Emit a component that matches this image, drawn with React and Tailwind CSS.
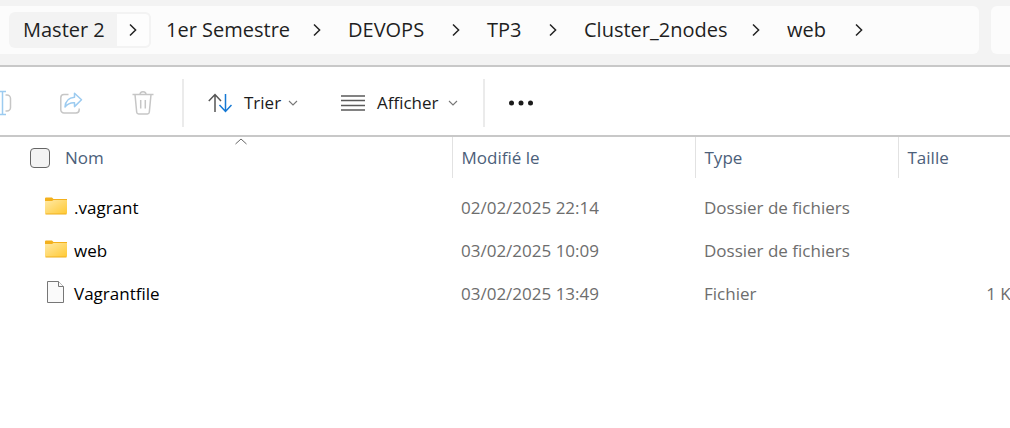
import React from "react";

const crumbs = [
  { label: "Master 2", width: "w-[108px]", active: true },
  { label: "1er Semestre", width: "w-[148px]" },
  { label: "DEVOPS", width: "w-[105px]" },
  { label: "TP3", width: "w-[63px]" },
  { label: "Cluster_2nodes", width: "w-[169px]" },
  { label: "web", width: "w-[69px]" },
];

const files = [
  { name: ".vagrant", date: "02/02/2025 22:14", type: "Dossier de fichiers", size: "", folder: true },
  { name: "web", date: "03/02/2025 10:09", type: "Dossier de fichiers", size: "", folder: true },
  { name: "Vagrantfile", date: "03/02/2025 13:49", type: "Fichier", size: "1 Ko", folder: false },
];

function ChevronRight() {
  return (
    <svg width="8" height="14" viewBox="0 0 8 14" fill="none" stroke="#222" strokeWidth="1.5" aria-hidden="true">
      <path d="M1 1.500 6.600 7 1 12.500" />
    </svg>
  );
}

function ChevronDown() {
  return (
    <svg width="10" height="6" viewBox="0 0 10 6" fill="none" stroke="#777" strokeWidth="1.1" aria-hidden="true">
      <path d="M1 1l4 4 4-4" />
    </svg>
  );
}

function RenameIcon() {
  return (
    <svg width="24" height="26" viewBox="0 0 24 26" fill="none" strokeWidth="1.5" aria-hidden="true">
      <path d="M12 5H4a3 3 0 0 0-3 3v10a3 3 0 0 0 3 3h8M17.500 5H19a3.500 3.500 0 0 1 3.500 3.500v9A3.500 3.500 0 0 1 19 21h-1.500" stroke="#c6c6c6" />
      <path d="M11 1.500h7M11 24.500h7M14.500 1.500v23" stroke="#9ccbf0" />
    </svg>
  );
}

function ShareIcon() {
  return (
    <svg width="24" height="24" viewBox="0 0 24 24" fill="none" strokeWidth="1.5" strokeLinejoin="round" aria-hidden="true">
      <path d="M9.500 3.500H5A3.200 3.200 0 0 0 1.800 6.700v12A3.200 3.200 0 0 0 5 22h12a3.200 3.200 0 0 0 3.200-3.200V17.500" stroke="#c6c6c6" />
      <path d="M15.500 2.200 22.500 8.800l-7 6.800v-3.800c-3.800-.2-6.900.9-9.500 4.200.4-5.800 4-9.400 9.500-9.800z" stroke="#9ccbf0" />
    </svg>
  );
}

function TrashIcon() {
  return (
    <svg width="24" height="26" viewBox="0 0 24 26" fill="none" stroke="#c6c6c6" strokeWidth="1.5" strokeLinejoin="round" aria-hidden="true">
      <path d="M1.500 4.500h21M9 4.500a3 2.800 0 0 1 6 0M4 4.500l1.700 17.700a2 2 0 0 0 2 1.800h8.600a2 2 0 0 0 2-1.800L20 4.500M9.700 10v8.500M14.300 10v8.500" />
    </svg>
  );
}

function SortIcon() {
  return (
    <svg width="24" height="20" viewBox="0 0 24 20" fill="none" strokeWidth="1.5" aria-hidden="true">
      <path d="M7 19V1.500M.8 8 7 1.500 13 8" stroke="#555" />
      <path d="M17.500 1v17.500M11.500 12l6 6.500 6-6.500" stroke="#1478d4" />
    </svg>
  );
}

function ListIcon() {
  return (
    <svg width="24" height="16" viewBox="0 0 24 16" stroke="#5a5a5a" strokeWidth="1.3" aria-hidden="true">
      <path d="M0 1h24M0 5.500h24M0 10.500h24M0 15h24" />
    </svg>
  );
}

function FolderIcon() {
  return (
    <svg width="22" height="18" viewBox="0 0 22 18" aria-hidden="true">
      <defs>
        <linearGradient id="folder" x1="0" y1="0" x2="1" y2="1">
          <stop offset="0" stopColor="#ffe9a6" />
          <stop offset="1" stopColor="#ffc933" />
        </linearGradient>
      </defs>
      <path d="M0 1.500Q0 .5 1 .5h6l1.500 1.500H22v4H0z" fill="#f3b01c" />
      <path d="M0 4h7l1.500-1H22v13q0 1-1 1H1q-1 0-1-1z" fill="url(#folder)" />
      <path d="M.5 17h21" stroke="#eeae1d" />
    </svg>
  );
}

function FileIcon() {
  return (
    <svg width="22" height="22" viewBox="0 0 22 22" fill="#fafafa" stroke="#777" aria-hidden="true">
      <path d="M2.500.5h11l5 5v16h-16z" />
      <path d="M13.500.5v5h5" />
    </svg>
  );
}

const headCell = "border-r border-[#e2e2e2] p-0 pl-[9px] text-left font-normal";

export default function App() {
  return (
    <main className="min-h-screen overflow-hidden bg-white font-['Open_Sans','Noto_Sans',sans-serif] text-[17px] leading-6">
      <header className="flex gap-3 overflow-hidden border-b-2 border-[#c8c8c8] bg-[#f3f3f3] pt-1.5 pb-[11px]">
        <nav aria-label="Chemin" className="flex h-12 min-w-0 flex-1 items-center rounded-r-md bg-[#fcfcfc] pl-[9px] text-xl text-[#1f1f1f]">
          {crumbs.map((c) => (
            <div
              key={c.label}
              className={
                c.active
                  ? "mr-px flex h-9 shrink-0 overflow-hidden rounded-md bg-[#f3f3f3]"
                  : "flex h-9 shrink-0"
              }
            >
              <a href="#" className={`flex items-center whitespace-nowrap pl-3.5 ${c.width}`}>
                {c.label}
              </a>
              <button
                aria-label={`Ouvrir ${c.label}`}
                className={
                  c.active
                    ? "flex w-[34px] items-center justify-center rounded-r-md border-2 border-l-0 border-[#f3f3f3] bg-[#fdfdfd]"
                    : "flex w-[34px] items-center justify-center"
                }
              >
                <ChevronRight />
              </button>
            </div>
          ))}
        </nav>
        <div className="h-12 w-[19px] shrink-0 rounded-l-md bg-[#fcfcfc]" />
      </header>

      <div role="toolbar" className="flex h-[70px] items-center border-b-2 border-[#c8c8c8] pt-1 text-[#1b1b1b]">
        <button aria-label="Renommer" className="-ml-3 w-6"><RenameIcon /></button>
        <button aria-label="Partager" className="ml-[47px] w-6"><ShareIcon /></button>
        <button aria-label="Supprimer" className="ml-12 w-6"><TrashIcon /></button>
        <div className="ml-[27px] h-12 w-0.5 bg-[#ebebeb]" />
        <button className="ml-6 flex w-[90px] items-center justify-between">
          <span className="flex items-center gap-3"><SortIcon />Trier</span>
          <ChevronDown />
        </button>
        <button className="ml-[43px] flex w-[117px] items-center justify-between">
          <span className="flex items-center gap-3"><ListIcon />Afficher</span>
          <ChevronDown />
        </button>
        <div className="ml-[25px] h-12 w-0.5 bg-[#ebebeb]" />
        <button aria-label="Plus" className="ml-6">
          <svg width="24" height="6" viewBox="0 0 24 6" fill="#1b1b1b" aria-hidden="true">
            <circle cx="2.500" cy="3" r="2.500" />
            <circle cx="12" cy="3" r="2.500" />
            <circle cx="21.500" cy="3" r="2.500" />
          </svg>
        </button>
      </div>

      <table className="w-full min-w-[1036px] table-fixed border-collapse">
        <colgroup>
          <col className="w-[452px]" />
          <col className="w-[243px]" />
          <col className="w-[203px]" />
          <col />
        </colgroup>
        <thead>
          <tr className="h-[41px] text-[#4c607a]">
            <th className="relative border-r border-[#e2e2e2] p-0 pl-[30px] text-left font-normal">
              <svg className="absolute top-px left-[235px]" width="12" height="7" viewBox="0 0 12 7" fill="none" stroke="#666" aria-hidden="true">
                <path d="M.5 6 6 1l5.500 5" />
              </svg>
              <div className="flex items-center gap-[15px]">
                <input
                  type="checkbox"
                  aria-label="Tout sélectionner"
                  className="size-5 appearance-none rounded border border-[#666] bg-[#f3f3f3]"
                />
                Nom
              </div>
            </th>
            <th className={headCell}>Modifié le</th>
            <th className={headCell}>Type</th>
            <th className="p-0 pl-[9px] text-left font-normal">Taille</th>
          </tr>
        </thead>
        <tbody className="text-[#6d6d6d] before:block before:h-2">
          {files.map((f) => (
            <tr key={f.name} className="h-[43px]">
              <td className="p-0 pl-[45px]">
                <div className="flex items-center gap-[7px] text-black">
                  <span className="pb-1">{f.folder ? <FolderIcon /> : <FileIcon />}</span>
                  {f.name}
                </div>
              </td>
              <td className="p-0 pl-[9px]">{f.date}</td>
              <td className="p-0 pl-[9px]">{f.type}</td>
              <td className="p-0 pr-[15px] text-right">{f.size}</td>
            </tr>
          ))}
        </tbody>
      </table>
    </main>
  );
}
